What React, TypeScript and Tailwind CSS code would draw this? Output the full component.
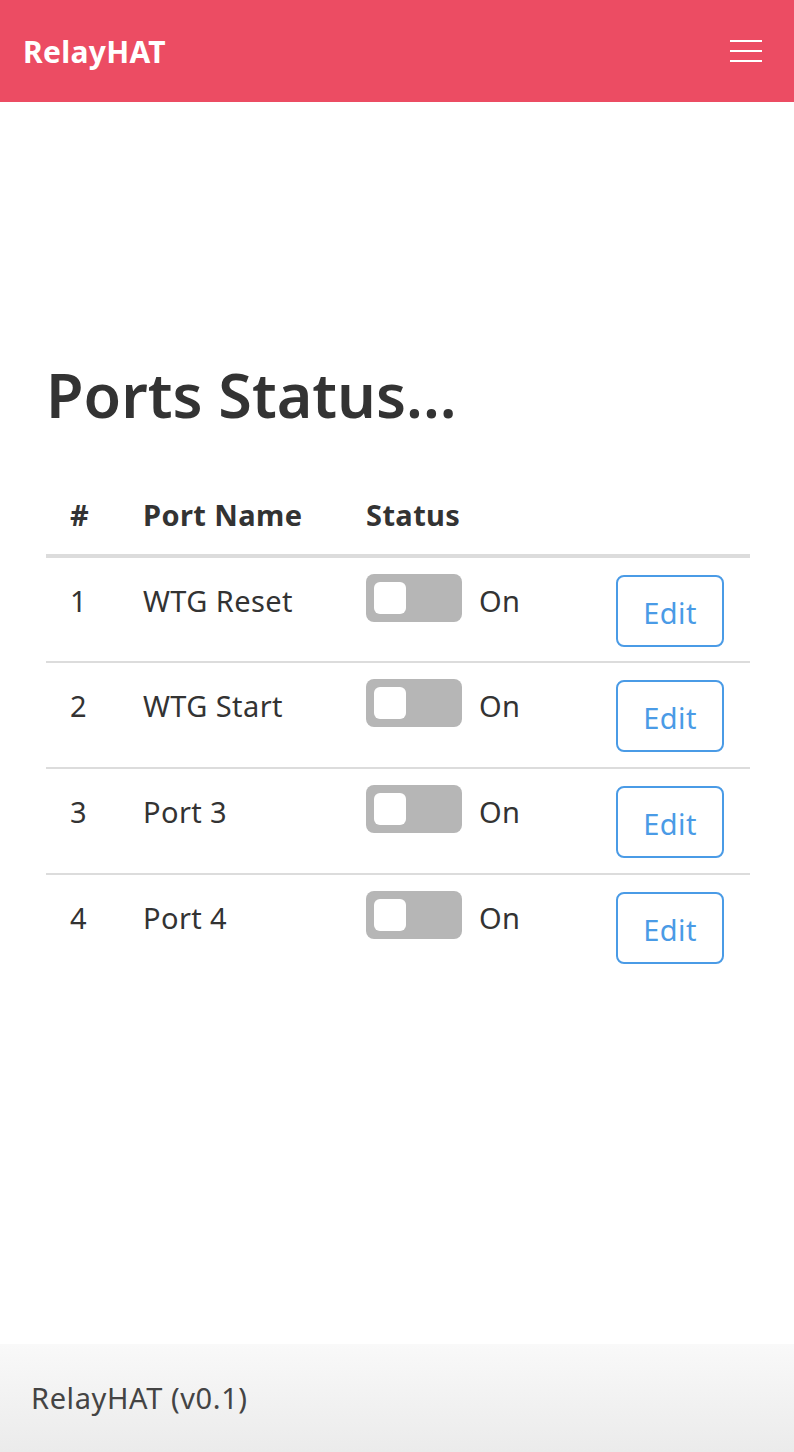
import React from 'react';

const ports = [
  { id: 1, name: 'WTG Reset' },
  { id: 2, name: 'WTG Start' },
  { id: 3, name: 'Port 3' },
  { id: 4, name: 'Port 4' },
];

function Toggle() {
  return (
    <div className="flex h-[48px] w-[96px] items-center rounded-[8px] bg-[#b6b6b6] px-[8px]">
      <div className="h-[32px] w-[32px] rounded-[6px] bg-white" />
    </div>
  );
}

export default function App() {
  return (
    <div
      className="flex min-h-[1452px] flex-col bg-white text-[#333]"
      style={{ fontFamily: '"Noto Sans", "Open Sans", sans-serif' }}
    >
      <nav className="flex h-[102px] items-center justify-between bg-[#ec4c63] pl-[23px] pr-[32px]">
        <span className="text-[30px] font-bold tracking-[0.3px] text-white">RelayHAT</span>
        <div className="flex w-[32px] flex-col gap-[8px]">
          <div className="h-[2px] bg-white" />
          <div className="h-[2px] bg-white" />
          <div className="h-[2px] bg-white" />
        </div>
      </nav>

      <main className="flex-1 pl-[46px] pr-[44px] pt-[254px]">
        <h1 className="text-[61px] font-semibold leading-[78px] text-[#333]">Ports Status...</h1>

        <table className="mt-[56px] w-full border-collapse text-[29px] tracking-[0.4px]">
          <thead>
            <tr className="border-b-[4px] border-[#dcdcdc]">
              <th className="h-[66px] w-[73px] pb-[14px] pl-[24px] text-left font-bold">#</th>
              <th className="w-[223px] pb-[14px] pl-[24px] text-left font-bold">Port Name</th>
              <th className="w-[250px] pb-[14px] pl-[24px] text-left font-bold">Status</th>
              <th />
            </tr>
          </thead>
          <tbody>
            {ports.map((p) => (
              <tr key={p.id} className="border-b-[2px] border-[#dcdcdc] last:border-b-0">
                <td className="h-[106px] pl-[24px] align-top pt-[21px]">{p.id}</td>
                <td className="pl-[24px] align-top pt-[21px]">{p.name}</td>
                <td className="pl-[24px] align-top pt-[15px]">
                  <div className="flex items-center gap-[17px]">
                    <Toggle />
                    <span className="mt-[6px]">On</span>
                  </div>
                </td>
                <td className="pl-[24px] align-top pt-[17px]">
                  <button className="h-[72px] w-[108px] rounded-[8px] border-[2px] border-[#4a9be6] pt-[4px] text-[29px] text-[#4a9be6]">
                    Edit
                  </button>
                </td>
              </tr>
            ))}
          </tbody>
        </table>
      </main>

      <footer className="flex h-[108px] items-center bg-[linear-gradient(to_bottom,#f9f9f9,#ebebeb)] pl-[31px]">
        <span className="text-[29px] tracking-[0.6px] text-[#444]">RelayHAT (v0.1)</span>
      </footer>
    </div>
  );
}
